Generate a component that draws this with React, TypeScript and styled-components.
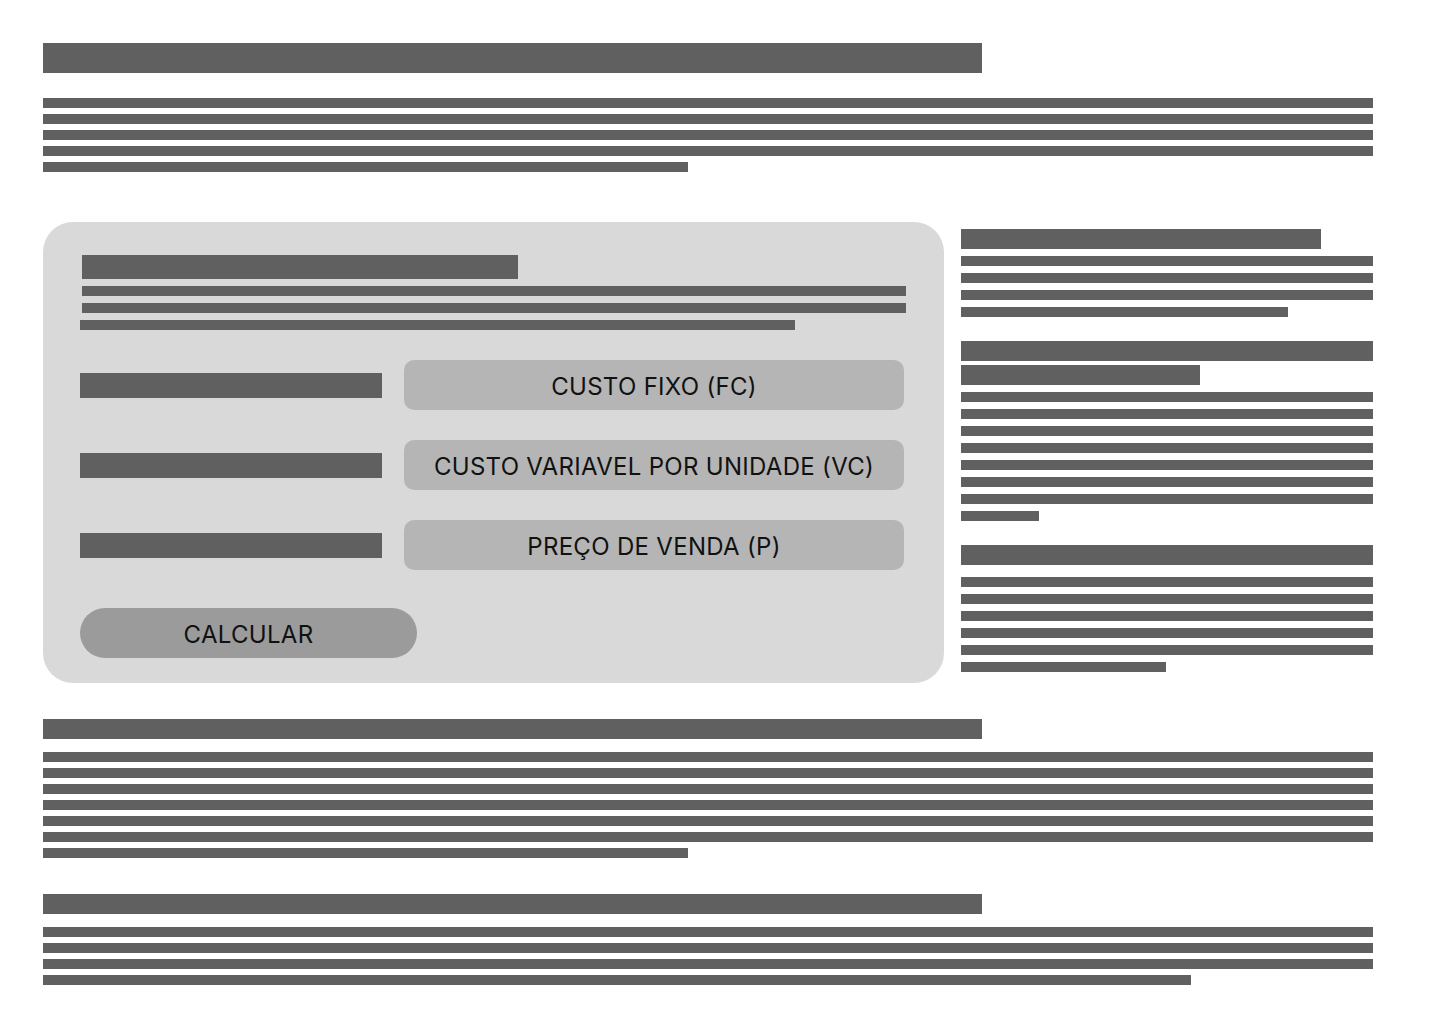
import React from "react";
import styled, { createGlobalStyle } from "styled-components";

const GlobalStyle = createGlobalStyle`
  * { box-sizing: border-box; }
  body {
    margin: 0;
    background: #ffffff;
    font-family: Inter, "Noto Sans", sans-serif;
  }
`;

const Page = styled.div`
  width: 1440px;
  padding: 43px 67px 40px 43px;
`;

const Bar = styled.div<{ $w?: string; $h?: number }>`
  width: ${(p) => p.$w || "100%"};
  height: ${(p) => p.$h || 10}px;
  background: #606060;
  flex-shrink: 0;
`;

const Lines = styled.div<{ $gap: number; $top?: number }>`
  display: flex;
  flex-direction: column;
  gap: ${(p) => p.$gap}px;
  margin-top: ${(p) => p.$top || 0}px;
`;

const Intro = styled.section`
  display: flex;
  flex-direction: column;
`;

const MainRow = styled.div`
  display: flex;
  align-items: flex-start;
  gap: 17px;
  margin-top: 50px;
`;

const Card = styled.div`
  width: 901px;
  height: 461px;
  flex-shrink: 0;
  background: #d9d9d9;
  border-radius: 30px;
  padding: 33px 38px 25px 37px;
  display: flex;
  flex-direction: column;
`;

const CardTitle = styled(Bar)`
  margin-left: 2px;
`;

const CardLine = styled(Bar)<{ $shift?: number }>`
  margin-left: ${(p) => p.$shift ?? 2}px;
`;

const Form = styled.div`
  display: flex;
  flex-direction: column;
  gap: 30px;
  margin-top: 30px;
`;

const Row = styled.div`
  display: flex;
  align-items: center;
  gap: 22px;
`;

const Field = styled.div`
  width: 500px;
  height: 50px;
  border-radius: 10px;
  background: #b5b5b5;
  display: flex;
  align-items: center;
  justify-content: center;
  font-size: 24px;
  letter-spacing: 0.3px;
  color: #111111;
  padding-top: 2px;
`;

const Calc = styled.button`
  margin-top: 38px;
  width: 337px;
  height: 50px;
  border: none;
  border-radius: 25px;
  background: #9b9b9b;
  font-family: Inter, "Noto Sans", sans-serif;
  font-size: 24px;
  letter-spacing: 0.3px;
  color: #111111;
  padding: 3px 0 0;
`;

const Side = styled.aside`
  flex: 1;
  display: flex;
  flex-direction: column;
  margin-top: 7px;
`;

const SideBlock = styled.div<{ $top?: number }>`
  display: flex;
  flex-direction: column;
  margin-top: ${(p) => p.$top || 0}px;
`;

const Bottom = styled.section<{ $top: number }>`
  display: flex;
  flex-direction: column;
  margin-top: ${(p) => p.$top}px;
`;

const rows = [
  "CUSTO FIXO (FC)",
  "CUSTO VARIAVEL POR UNIDADE (VC)",
  "PREÇO DE VENDA (P)",
];

const para = (n: number, last: string) =>
  Array.from({ length: n }, (_, i) => (
    <Bar key={i} $w={i === n - 1 ? last : "100%"} />
  ));

export default function App() {
  return (
    <Page>
      <GlobalStyle />
      <Intro>
        <Bar $w="939px" $h={30} />
        <Lines $gap={6} $top={25}>
          {para(5, "645px")}
        </Lines>
      </Intro>

      <MainRow>
        <Card>
          <CardTitle $w="436px" $h={24} />
          <Lines $gap={7} $top={7}>
            <CardLine $w="824px" />
            <CardLine $w="824px" />
            <CardLine $w="715px" $shift={0} />
          </Lines>
          <Form>
            {rows.map((label) => (
              <Row key={label}>
                <Bar $w="302px" $h={25} />
                <Field>{label}</Field>
              </Row>
            ))}
          </Form>
          <Calc>CALCULAR</Calc>
        </Card>

        <Side>
          <SideBlock>
            <Bar $w="360px" $h={20} />
            <Lines $gap={7} $top={7}>
              {para(4, "327px")}
            </Lines>
          </SideBlock>
          <SideBlock $top={24}>
            <Lines $gap={4}>
              <Bar $h={20} />
              <Bar $w="239px" $h={20} />
            </Lines>
            <Lines $gap={7} $top={7}>
              {para(8, "78px")}
            </Lines>
          </SideBlock>
          <SideBlock $top={24}>
            <Bar $h={20} />
            <Lines $gap={7} $top={12}>
              {para(6, "205px")}
            </Lines>
          </SideBlock>
        </Side>
      </MainRow>

      <Bottom $top={36}>
        <Bar $w="939px" $h={20} />
        <Lines $gap={6} $top={13}>
          {para(7, "645px")}
        </Lines>
      </Bottom>

      <Bottom $top={36}>
        <Bar $w="939px" $h={20} />
        <Lines $gap={6} $top={13}>
          {para(4, "1148px")}
        </Lines>
      </Bottom>
    </Page>
  );
}
